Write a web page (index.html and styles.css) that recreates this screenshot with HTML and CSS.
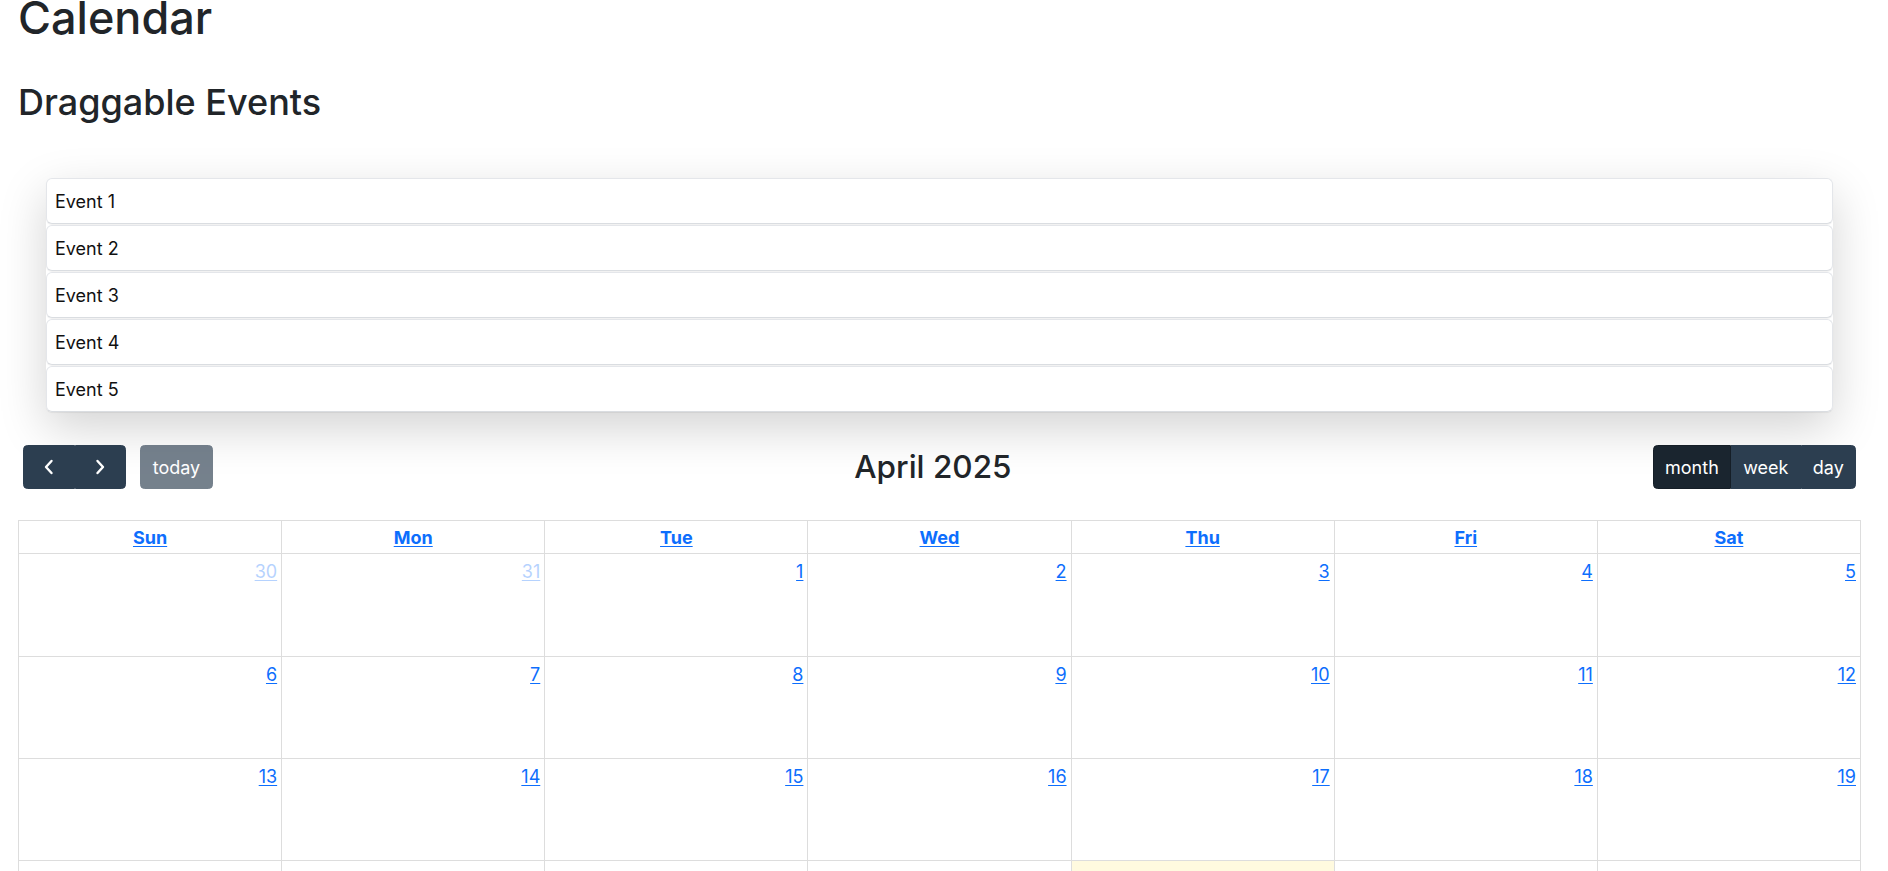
FILE: index.html
```html
<!DOCTYPE html>
<html lang="en">
<head>
<meta charset="utf-8">
<title>Calendar</title>
<link rel="stylesheet" href="styles.css">
</head>
<body>
<div class="page">
  <h1 class="page-title">Calendar</h1>
  <h2 class="section-title">Draggable Events</h2>

  <div class="event-list">
    <div class="ext-event">Event 1</div>
    <div class="ext-event">Event 2</div>
    <div class="ext-event">Event 3</div>
    <div class="ext-event">Event 4</div>
    <div class="ext-event">Event 5</div>
  </div>

  <div class="toolbar">
    <div class="tb-chunk">
      <div class="btn-group">
        <button class="btn btn-icon" aria-label="prev">
          <svg width="12" height="16" viewBox="0 0 12 16"><polyline points="8.5,2 3,8 8.5,14" fill="none" stroke="#fff" stroke-width="2.4" stroke-linecap="round" stroke-linejoin="round"/></svg>
        </button>
        <button class="btn btn-icon" aria-label="next">
          <svg width="12" height="16" viewBox="0 0 12 16"><polyline points="3.5,2 9,8 3.5,14" fill="none" stroke="#fff" stroke-width="2.4" stroke-linecap="round" stroke-linejoin="round"/></svg>
        </button>
      </div>
      <button class="btn btn-today">today</button>
    </div>
    <h2 class="tb-title">April 2025</h2>
    <div class="btn-group">
      <button class="btn active">month</button>
      <button class="btn">week</button>
      <button class="btn">day</button>
    </div>
  </div>

  <div class="grid">
    <div class="hcell"><a href="#">Sun</a></div>
    <div class="hcell"><a href="#">Mon</a></div>
    <div class="hcell"><a href="#">Tue</a></div>
    <div class="hcell"><a href="#">Wed</a></div>
    <div class="hcell"><a href="#">Thu</a></div>
    <div class="hcell"><a href="#">Fri</a></div>
    <div class="hcell"><a href="#">Sat</a></div>

    <div class="dcell other"><a href="#">30</a></div>
    <div class="dcell other"><a href="#">31</a></div>
    <div class="dcell"><a href="#">1</a></div>
    <div class="dcell"><a href="#">2</a></div>
    <div class="dcell"><a href="#">3</a></div>
    <div class="dcell"><a href="#">4</a></div>
    <div class="dcell"><a href="#">5</a></div>

    <div class="dcell"><a href="#">6</a></div>
    <div class="dcell"><a href="#">7</a></div>
    <div class="dcell"><a href="#">8</a></div>
    <div class="dcell"><a href="#">9</a></div>
    <div class="dcell"><a href="#">10</a></div>
    <div class="dcell"><a href="#">11</a></div>
    <div class="dcell"><a href="#">12</a></div>

    <div class="dcell"><a href="#">13</a></div>
    <div class="dcell"><a href="#">14</a></div>
    <div class="dcell"><a href="#">15</a></div>
    <div class="dcell"><a href="#">16</a></div>
    <div class="dcell"><a href="#">17</a></div>
    <div class="dcell"><a href="#">18</a></div>
    <div class="dcell"><a href="#">19</a></div>

    <div class="dcell"><a href="#">20</a></div>
    <div class="dcell"><a href="#">21</a></div>
    <div class="dcell"><a href="#">22</a></div>
    <div class="dcell"><a href="#">23</a></div>
    <div class="dcell today"><a href="#">24</a></div>
    <div class="dcell"><a href="#">25</a></div>
    <div class="dcell"><a href="#">26</a></div>

    <div class="dcell"><a href="#">27</a></div>
    <div class="dcell"><a href="#">28</a></div>
    <div class="dcell"><a href="#">29</a></div>
    <div class="dcell"><a href="#">30</a></div>
    <div class="dcell other"><a href="#">1</a></div>
    <div class="dcell other"><a href="#">2</a></div>
    <div class="dcell other"><a href="#">3</a></div>

    <div class="dcell other"><a href="#">4</a></div>
    <div class="dcell other"><a href="#">5</a></div>
    <div class="dcell other"><a href="#">6</a></div>
    <div class="dcell other"><a href="#">7</a></div>
    <div class="dcell other"><a href="#">8</a></div>
    <div class="dcell other"><a href="#">9</a></div>
    <div class="dcell other"><a href="#">10</a></div>
  </div>
</div>
</body>
</html>
```

FILE: styles.css
```css
* { box-sizing: border-box; }

html, body {
  margin: 0;
  padding: 0;
  background: #fff;
}

body {
  font-family: Inter, "Noto Sans", "Liberation Sans", sans-serif;
  font-size: 18px;
  line-height: 1.5;
  color: #212529;
}

.page {
  padding: 0 27px 40px 18px;
}

.page-title {
  margin: -9px 0 0;
  font-size: 45px;
  font-weight: 500;
  line-height: 1.2;
}

.section-title {
  margin: 36px 0 0;
  font-size: 36px;
  font-weight: 500;
  line-height: 1.2;
}

.event-list {
  margin: 54px 28px 0;
  box-shadow: 0 16px 48px rgba(0, 0, 0, 0.175);
  border-radius: 6px;
}

.ext-event {
  height: 46px;
  margin-bottom: 1px;
  padding: 0 8px;
  display: flex;
  align-items: center;
  background: #fff;
  border: 1px solid #e4e6ea;
  border-bottom-color: #dadde1;
  border-radius: 6px;
  box-shadow: 0 1px 1px rgba(0, 0, 0, 0.06);
  color: #111;
  font-size: 18px;
}

.ext-event:last-child { margin-bottom: 0; }

.toolbar {
  margin: 33px 5px 0;
  display: flex;
  justify-content: space-between;
  align-items: center;
}

.tb-chunk {
  display: flex;
  align-items: center;
}

.tb-title {
  margin: 0;
  font-size: 31.5px;
  font-weight: 500;
  line-height: 1.4;
  color: #212529;
}

.btn-group {
  display: flex;
}

.btn {
  font-family: inherit;
  font-size: 18px;
  line-height: 1.5;
  color: #fff;
  background: #2c3e50;
  border: 1px solid #2c3e50;
  padding: 7px 11.2px;
  border-radius: 0;
  height: 44px;
  display: flex;
  align-items: center;
  justify-content: center;
}

.btn-group .btn:first-child {
  border-top-left-radius: 4.5px;
  border-bottom-left-radius: 4.5px;
}

.btn-group .btn:last-child {
  border-top-right-radius: 4.5px;
  border-bottom-right-radius: 4.5px;
}

.btn.active {
  background: #1a252f;
  border-color: #151e27;
}

.btn-icon {
  width: 51.5px;
  padding: 0;
}

.btn-today {
  margin-left: 14px;
  border-radius: 4.5px;
  opacity: 0.65;
  width: 73px;
  padding: 0;
}

.grid {
  margin-top: 31px;
  display: grid;
  grid-template-columns: repeat(7, 1fr);
  border-top: 1px solid #ddd;
  border-left: 1px solid #ddd;
}

.grid a {
  color: #0d6efd;
  text-decoration: underline;
  text-underline-offset: 2px;
}

.hcell {
  height: 33px;
  border-right: 1px solid #ddd;
  border-bottom: 1px solid #ddd;
  display: flex;
  align-items: center;
  justify-content: center;
  font-weight: 700;
}

.dcell {
  height: 102.4px;
  border-right: 1px solid #ddd;
  border-bottom: 1px solid #ddd;
  display: flex;
  justify-content: flex-end;
  align-items: flex-start;
  padding: 4px;
}

.dcell a {
  line-height: 27px;
}

.dcell.other a {
  opacity: 0.3;
}

.dcell.today {
  background: rgba(255, 220, 40, 0.15);
}
```
